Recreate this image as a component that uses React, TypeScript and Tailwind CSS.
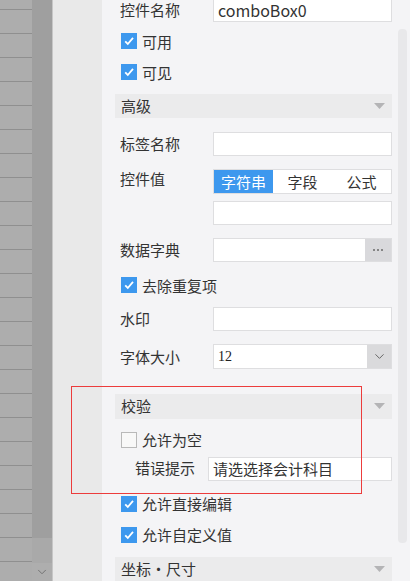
import { ChevronDown } from "lucide-react"

const font = { fontFamily: '"Noto Sans CJK SC", "Noto Sans", sans-serif' }

const Check = ({ on }: { on: boolean }) =>
  on ? (
    <span className="flex h-[16px] w-[16px] items-center justify-center bg-[#3d98ee]">
      <svg width="12" height="12" viewBox="0 0 12 12">
        <path d="M2.2 6.4 L4.8 9 L10 2.8" fill="none" stroke="white" strokeWidth="1.8" />
      </svg>
    </span>
  ) : (
    <span className="h-[16px] w-[16px] border border-[#b9b9b9] bg-[#f8f8f8]" />
  )

const CheckRow = ({ label, on, className = "" }: { label: string; on: boolean; className?: string }) => (
  <div className={`flex h-[16px] items-center gap-[5px] pl-[6px] ${className}`}>
    <Check on={on} />
    <span className="text-[15px] leading-none text-[#333]">{label}</span>
  </div>
)

const Header = ({ title, className = "" }: { title: string; className?: string }) => (
  <div className={`flex h-[25px] items-center justify-between bg-[#ebebec] pl-[6px] pr-[7px] ${className}`}>
    <span className="text-[15px] text-[#333]">{title}</span>
    <svg width="11" height="6" viewBox="0 0 11 6">
      <path d="M0 0 L11 0 L5.5 6 Z" fill="#b4b4b6" />
    </svg>
  </div>
)

const Field = ({ label, children, className = "" }: { label: string; children?: React.ReactNode; className?: string }) => (
  <div className={`flex items-center ${className}`}>
    <span className="w-[98px] pl-[5px] text-[15px] leading-[16px] text-[#333]">{label}</span>
    <div className="flex-1">{children}</div>
  </div>
)

const Input = ({ value = "", className = "" }: { value?: string; className?: string }) => (
  <div
    className={`flex h-[24px] items-center border border-[#dedee0] bg-white pl-[4px] text-[15px] leading-[16px] text-[#333] ${className}`}
  >
    {value}
  </div>
)

export default function App() {
  return (
    <div className="relative flex h-[581px] w-[410px] overflow-hidden bg-[#f4f4f6]" style={font}>
      {/* sheet rows */}
      <div className="w-[32px] bg-[#adadad]">
        <div className="-mt-[14px] flex flex-col">
          {Array.from({ length: 26 }).map((_, i) => (
            <div key={i} className="h-[24px] border-b border-[#8f8f8f]" />
          ))}
        </div>
      </div>
      {/* sheet scrollbar */}
      <div className="flex w-[20px] flex-col bg-[#a9a9a9]">
        <div className="h-[538px] bg-[#9f9f9f]" />
        <div className="h-[25px]" />
        <div className="flex h-[18px] items-center justify-center bg-[#aeaeae]">
          <ChevronDown size={14} color="#6a6a6a" strokeWidth={1.5} />
        </div>
      </div>
      <div className="w-[1px] bg-[#c6c6c6]" />
      <div className="w-[49px] bg-[#e9e9e9]" />

      {/* property panel */}
      <div className="flex w-[295px] flex-col pl-[13px] pr-[5px]">
        <Field label="控件名称" className="h-[20px]">
          <Input value="comboBox0" className="h-[20px] border-t-0 pl-[4px] text-[16px] text-[#1a1a40]" />
        </Field>
        <CheckRow label="可用" on className="mt-[13px]" />
        <CheckRow label="可见" on className="mt-[15px]" />
        <Header title="高级" className="mt-[14px]" />
        <Field label="标签名称" className="mt-[14px]">
          <Input />
        </Field>
        <div className="mt-[13px] flex">
          <span className="w-[98px] pl-[5px] text-[15px] leading-[20px] text-[#333]">控件值</span>
          <div className="flex-1">
            <div className="grid h-[25px] grid-cols-3 border border-[#dedee0] bg-white text-[15px] text-[#333]">
              <div className="flex items-center justify-center bg-[#3d98ee] text-white">字符串</div>
              <div className="flex items-center justify-center">字段</div>
              <div className="flex items-center justify-center">公式</div>
            </div>
            <Input className="mt-[7px]" />
          </div>
        </div>
        <Field label="数据字典" className="mt-[13px]">
          <div className="flex h-[24px] border border-[#dedee0] bg-white">
            <div className="flex-1" />
            <div className="flex w-[26px] items-center justify-center gap-[2px] bg-[#d9d9dc]">
              <span className="h-[2px] w-[2px] bg-[#858585]" />
              <span className="h-[2px] w-[2px] bg-[#858585]" />
              <span className="h-[2px] w-[2px] bg-[#858585]" />
            </div>
          </div>
        </Field>
        <CheckRow label="去除重复项" on className="mt-[15px]" />
        <Field label="水印" className="mt-[14px]">
          <Input />
        </Field>
        <Field label="字体大小" className="mt-[13px]">
          <div className="flex h-[25px] border border-[#dedee0] bg-white">
            <div
              className="flex flex-1 items-center pl-[4px] text-[14px] text-[#222]"
              style={{ fontFamily: '"Liberation Serif", serif' }}
            >
              12
            </div>
            <div className="flex w-[24px] items-center justify-center bg-[#dadadc]">
              <ChevronDown size={15} color="#666" strokeWidth={1.6} />
            </div>
          </div>
        </Field>
        <Header title="校验" className="mt-[25px]" />
        <CheckRow label="允许为空" on={false} className="mt-[13px]" />
        <div className="mt-[9px] flex items-center">
          <span className="w-[93px] pl-[20px] text-[15px] text-[#333]">错误提示</span>
          <Input value="请选选择会计科目" className="flex-1" />
        </div>
        <CheckRow label="允许直接编辑" on className="mt-[15px]" />
        <CheckRow label="允许自定义值" on className="mt-[15px]" />
        <Header title="坐标・尺寸" className="mt-[14px]" />
      </div>

      {/* panel scrollbar */}
      <div className="w-[13px] pl-[1px] pt-[29px]">
        <div className="h-[514px] w-[9px] rounded-[4px] bg-[#e8e8ea]" />
      </div>

      {/* annotation box */}
      <div className="pointer-events-none absolute left-[71px] top-[386px] h-[108px] w-[291px] border border-[#ec3c3c]" />
    </div>
  )
}
